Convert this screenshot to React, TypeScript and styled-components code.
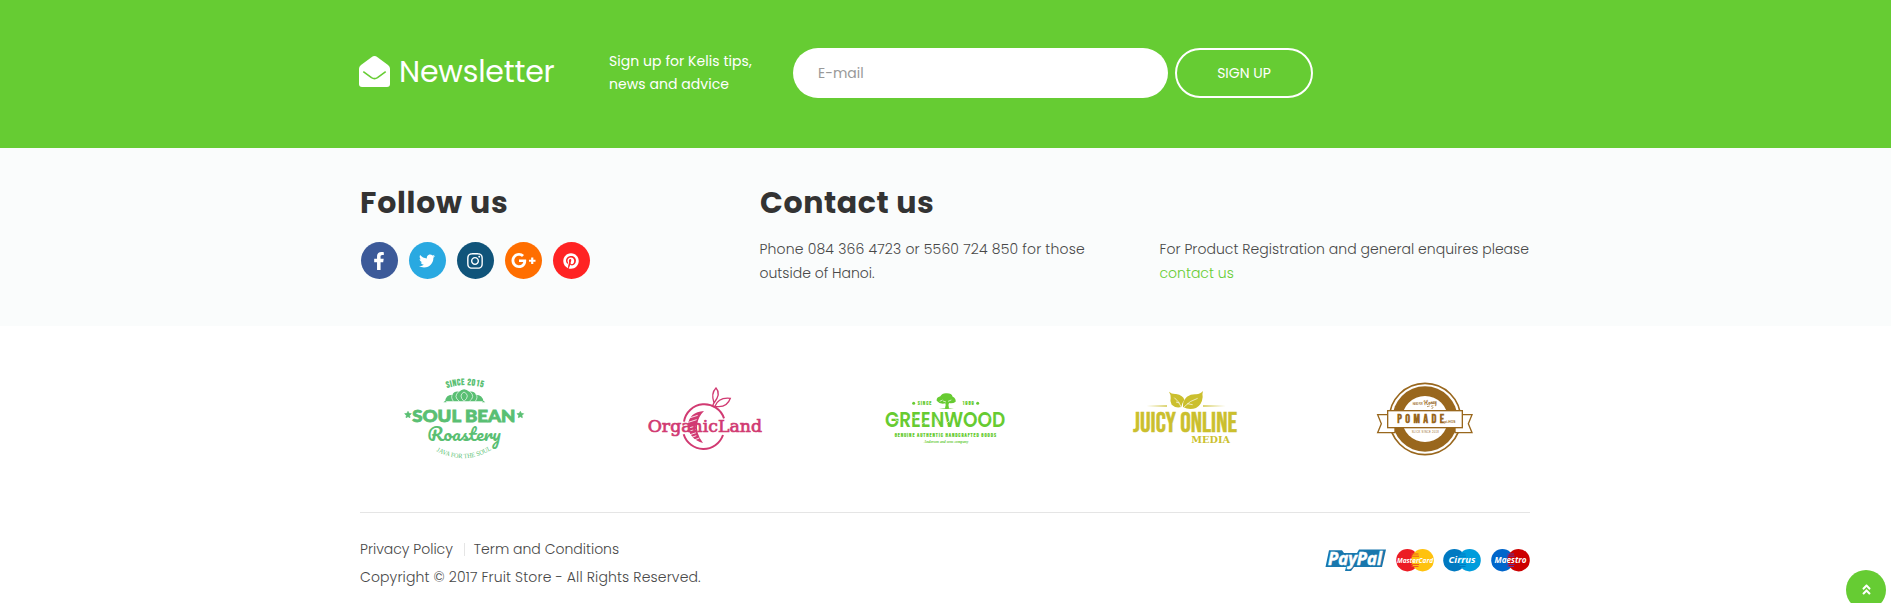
import React from 'react';
import styled, { createGlobalStyle } from 'styled-components';
import { FaFacebookF, FaTwitter, FaInstagram, FaGooglePlusG, FaPinterest, FaAngleDoubleUp } from 'react-icons/fa';

const GlobalStyle = createGlobalStyle`
  * { box-sizing: border-box; }
  body {
    margin: 0;
    background: #fff;
    color: #484848;
    font-family: Poppins, Inter, "Open Sans", sans-serif;
    font-size: 14px;
    line-height: 24px;
    overflow: hidden;
  }
  a { color: inherit; text-decoration: none; }
`;

const Container = styled.div`
  width: 1170px;
  margin: 0 auto 0 360px;
`;

const NewsletterBand = styled.section`
  height: 148px;
  background: #66cc33;
  color: #fff;
`;

const NewsletterRow = styled(Container)`
  display: flex;
  align-items: center;
  height: 146px;
`;

const NewsletterTitle = styled.h3`
  display: flex;
  align-items: center;
  width: 249px;
  margin: 0 0 3px;
  font-size: 30px;
  font-weight: 400;
  line-height: 36px;
  letter-spacing: -0.2px;
  svg { margin: 0 9px 0 -1px; flex: none; }
`;

const NewsletterText = styled.p`
  width: 184px;
  margin: 0;
  line-height: 23px;
  letter-spacing: 0.05px;
`;

const EmailInput = styled.input`
  width: 375px;
  height: 50px;
  padding: 0 25px;
  border: 0;
  border-radius: 25px;
  background: #fff;
  font: inherit;
  &::placeholder { color: #999; opacity: 1; }
`;

const SignUpButton = styled.button`
  width: 138px;
  height: 50px;
  margin-left: 7px;
  padding: 0;
  border: 2px solid #fff;
  border-radius: 25px;
  background: transparent;
  color: #fff;
  font: inherit;
`;

const InfoBand = styled.section`
  height: 178px;
  padding-top: 37px;
  background: #fafcfc;
`;

const InfoRow = styled(Container)`
  display: grid;
  grid-template-columns: 400px 400px 370px;
`;

const Heading = styled.h2<{ $spacing?: number }>`
  height: 36px;
  margin: 0 0 21px;
  color: #333;
  font-size: 30px;
  font-weight: 700;
  line-height: 36px;
  letter-spacing: ${p => p.$spacing ?? 0.6}px;
  white-space: nowrap;
`;

const Paragraph = styled.p`
  margin: -5px 0 0 -0.5px;
  font-weight: 300;
  white-space: nowrap;
`;

const Line = styled.span<{ $spacing: number }>`
  display: block;
  letter-spacing: ${p => p.$spacing}px;
`;

const GreenLink = styled.a`
  && { color: #66cc33; }
`;

const SocialList = styled.div`
  display: flex;
  gap: 11px;
  padding-left: 0.5px;
`;

const SocialLink = styled.a<{ $bg: string }>`
  display: flex;
  align-items: center;
  justify-content: center;
  width: 37px;
  height: 37px;
  border-radius: 50%;
  background: ${p => p.$bg};
  && { color: #fff; }
`;

const BrandRow = styled.section`
  display: flex;
  width: 1200px;
  height: 186px;
  margin: 0 auto 0 345px;
  padding-top: 44px;
`;

const Brand = styled.a`
  flex: 1;
  display: flex;
  justify-content: center;
  align-items: flex-start;
`;

const FooterBar = styled(Container)`
  display: flex;
  justify-content: space-between;
  height: 91px;
  border-top: 1px solid #e5e5e5;
  font-weight: 300;
  white-space: nowrap;
`;

const Legal = styled.div`
  padding-top: 22px;
  line-height: 28px;
`;

const LegalLinks = styled.div`
  display: flex;
  align-items: center;
`;

const Separator = styled.span`
  width: 1px;
  height: 13px;
  margin: 0 9px 0 11px;
  background: #e5e5e5;
`;

const Copyright = styled.div`
  letter-spacing: 0.13px;
`;

const Payments = styled.div`
  display: flex;
  align-items: flex-start;
  padding-top: 36px;
  svg { display: block; }
`;

const BackToTop = styled.a`
  position: fixed;
  right: 5px;
  bottom: -7px;
  display: flex;
  align-items: center;
  justify-content: center;
  width: 40px;
  height: 40px;
  padding-bottom: 2px;
  border-radius: 50%;
  background: #66cc33;
  && { color: #fff; }
`;

const EnvelopeIcon = () => (
  <svg width="31" height="31" viewBox="0 0 31 31">
    <path d="M2 9 L12.5 1.2 Q15.5 -1 18.5 1.2 L29 9 Q31 10.5 31 12.5 V28 Q31 31 28 31 H3 Q0 31 0 28 V12.5 Q0 10.5 2 9Z" fill="#fff" />
    <path d="M4.3 15.6 L12.5 21.6 Q15.5 23.6 18.5 21.6 L26.7 15.6" fill="none" stroke="#66cc33" strokeWidth="1.6" />
  </svg>
);

const fit = { lengthAdjust: 'spacingAndGlyphs' as const };
const condensed = '"Bebas Neue", Oswald, "Roboto Condensed", "Liberation Sans Narrow", "Liberation Sans", sans-serif';
const script = 'Pacifico, "Dancing Script", Z003, "Liberation Serif", serif';

const SoulBean = () => (
  <svg width="150" height="100" viewBox="0 0 450 300" fill="#5abf73">
    <path id="soulTop" d="M171 54 Q226 36 284 54" fill="none" />
    <path id="soulBottom" d="M139 243 Q222 288 305 239" fill="none" />
    <text fontFamily={condensed} fontWeight="700" fontSize="27"><textPath href="#soulTop" textLength="110">SINCE 2015</textPath></text>
    <path d="M166 94 Q166 75 187 74 Q193 62 207 65 Q222 50 238 65 Q252 62 258 74 Q278 74 280 94Z" />
    <path d="M190 94 Q181 80 188 73 M208 94 Q189 80 206 65 M238 94 Q257 80 240 65 M256 94 Q265 80 258 73 M222 94 Q204 76 222 66 Q242 76 222 94" fill="none" stroke="#fff" strokeWidth="2" />
    <path d="M160 97 l6 -5 4 5Z M276 97 l4 -5 6 5Z" />
    <path d="M54 124 l3 6 7 1 -5 5 1 7 -6 -3 -6 3 1 -7 -5 -5 7 -1Z M391 124 l3 6 7 1 -5 5 1 7 -6 -3 -6 3 1 -7 -5 -5 7 -1Z" stroke="#5abf73" strokeWidth="2" />
    <text x="67" y="156" fontFamily="Lato" fontWeight="900" fontSize="50" textLength="309" stroke="#5abf73" strokeWidth="2.5" {...fit}>SOUL BEAN</text>
    <text x="112" y="213" fontFamily={script} fontWeight="400" fontSize="50" textLength="220" {...fit}>Roastery</text>
    <text fontFamily="Liberation Serif" fontSize="20"><textPath href="#soulBottom" textLength="174" {...fit}>JAVA FOR THE SOUL</textPath></text>
  </svg>
);

const OrganicLand = () => (
  <svg width="150" height="100" viewBox="-15 -15 450 300" fill="#d13a72">
    <g fill="none" stroke="#d13a72">
      <path d="M147 140 A62 62 0 0 1 267 130 M146 178 A62 62 0 0 0 264 180" strokeWidth="6" />
      <path d="M237 84 Q227 55 243 39 Q259 56 237 84 M240 94 Q250 66 286 70 Q276 100 240 94 M233 92 L238 80" strokeWidth="4" />
    </g>
    <path d="M207 108 Q163 111 158 151 Q163 194 204 204 Q181 174 187 145 Q191 124 207 108Z" />
    <path d="M163 129 l25 -8 M160 142 l25 -8 M162 190 l22 -8 M169 198 l24 -9 M160 181 l23 -8 M158 160 l24 -7 M158 170 l24 -7" stroke="#fff" strokeWidth="2.5" />
    <text x="38" y="172" fontFamily='"DejaVu Serif", serif' fontWeight="400" fontSize="49" textLength="343" stroke="#d13a72" strokeWidth="2" {...fit}>OrganicLand</text>
  </svg>
);

const Greenwood = () => (
  <svg width="150" height="100" viewBox="0 -30 450 300" fill="#67cb31">
    <circle cx="131" cy="70" r="4.5" /><circle cx="323" cy="70" r="4.5" />
    <g fontFamily={condensed} fontWeight="700">
      <text x="143" y="76" fontSize="17" textLength="41">SINCE</text>
      <text x="277" y="76" fontSize="17" textLength="34">1989</text>
      <text x="74" y="171" fontSize="17" textLength="304">GENUINE AUTHENTIC HANDCRAFTED GOODS</text>
    </g>
    <path d="M200 62 Q199 52 211 49 Q217 38 231 40 Q245 40 248 50 Q258 54 257 65 Q248 72 237 69 Q233 76 237 85 H225 Q229 75 226 70 Q210 74 200 62Z M207 87 Q230 82 252 87Z" />
    <path d="M209 64 l9 -4 M219 63 l9 3 M234 64 l10 -4" stroke="#fff" strokeWidth="2" />
    <text x="45" y="142" fontFamily="Poppins, Lato" fontWeight="600" fontSize="63" textLength="361" {...fit}>GREENWOOD</text>
    <path d="M76 119 l12 6 M126 111 l11 4 M154 132 l14 -7 M194 110 l12 18 M226 134 l12 -12 M352 106 l6 9" stroke="#fff" strokeWidth="2" />
    <text x="162" y="188" fontFamily="Liberation Serif" fontStyle="italic" fontWeight="700" fontSize="13" textLength="133" {...fit}>Anderson and sons company</text>
  </svg>
);

const JuicyOnline = () => (
  <svg width="150" height="100" viewBox="-30 -30 450 300" fill="#cbbf2e">
    <defs>
      <linearGradient id="fadeL"><stop stopColor="#cbbf2e" stopOpacity="0" /><stop offset="1" stopColor="#cbbf2e" /></linearGradient>
      <linearGradient id="fadeR"><stop stopColor="#cbbf2e" /><stop offset="1" stopColor="#cbbf2e" stopOpacity="0" /></linearGradient>
    </defs>
    <rect x="80" y="76" width="61" height="4" fill="url(#fadeL)" />
    <rect x="249" y="76" width="68" height="4" fill="url(#fadeR)" />
    <path d="M147 35 Q155 43 168 42 Q190 46 193 60 Q186 68 184 81 Q168 86 155 74 Q149 64 152 54 Q152 42 147 35Z" />
    <path d="M249 33 Q246 43 248 51 Q246 74 228 84 Q208 92 189 81 Q187 63 201 50 Q213 42 228 43 Q242 42 249 33Z" />
    <path d="M163 53 Q178 65 184 82 M191 82 Q210 61 233 55 M168 66 l10 3 M202 71 l16 3" stroke="#fff" strokeWidth="2" fill="none" />
    <text x="39" y="156" fontFamily={condensed} fontWeight="400" fontSize="84" textLength="312" stroke="#cbbf2e" strokeWidth="1.5" {...fit}>JUICY ONLINE</text>
    <text x="214" y="188" fontFamily="DejaVu Serif" fontWeight="700" fontSize="29" textLength="116" {...fit}>MEDIA</text>
  </svg>
);

const Pomade = () => (
  <svg width="150" height="100" viewBox="-45 -15 450 300" fill="#99671d">
    <circle cx="180" cy="132" r="107" fill="#fff" stroke="#99671d" strokeWidth="5" />
    <circle cx="180" cy="132" r="98" />
    <circle cx="180" cy="132" r="69" fill="#fff" />
    <path d="M68 119 H38 L49 146 L38 173 H90 V158 M292 119 H321 L310 146 L321 173 H270 V158" fill="#fff" stroke="#99671d" strokeWidth="4" />
    <rect x="68" y="107" width="224" height="51" fill="#fff" stroke="#99671d" strokeWidth="4" />
    <text x="97" y="144" fontFamily={condensed} fontWeight="700" fontSize="36" textLength="140">POMADE</text>
    <text x="238" y="144" fontFamily="Liberation Sans" fontWeight="700" fontSize="11" textLength="33" {...fit}>pi-HOS</text>
    <text x="143" y="89" fontFamily="Liberation Sans" fontWeight="700" fontSize="8" textLength="30" {...fit}>HAND FOR</text>
    <text x="177" y="91" fontFamily={script} fontSize="17" textLength="39" transform="rotate(-8 176 91)" {...fit}>Honey</text>
    <path d="M186 95 l8 -2 M198 94 l7 -2 M200 102 l5 -6" stroke="#99671d" strokeWidth="2" />
    <text x="140" y="173" fontFamily="Liberation Sans" fontWeight="400" fontSize="8" textLength="81">SLICK SINCE 2018</text>
  </svg>
);

const PayPal = () => (
  <svg width="61" height="24" viewBox="0 0 61 24">
    <path d="M4 1.2 H17 L19 4 H32 L34 .5 H61 L57 18 H29 L26 22 H20 L21 18 H0.5Z" fill="#1877ad" />
    <text x="3" y="16" fontFamily="Open Sans" fontStyle="italic" fontWeight="700" fontSize="17" textLength="54" fill="#fff" stroke="#fff" strokeWidth=".5" {...fit}>PayPal</text>
  </svg>
);

type CardProps = { width: number; left: string; right: string; stripe: string; label: string; size: number; inset: number };

const OverlapCard = ({ width, left, right, stripe, label, size, inset }: CardProps) => (
  <svg width={width} height="23" viewBox={`0 0 ${width} 23`}>
    <circle cx="11.4" cy="11.2" r="11.2" fill={left} />
    <circle cx={width - 11.4} cy="11.2" r="11.2" fill={right} />
    <path d={`M${width / 2 - 3.5} 5 h7 M${width / 2 - 4} 7.2 h8 M${width / 2 - 4} 15.5 h8 M${width / 2 - 3.5} 17.5 h7`} stroke={stripe} strokeWidth="1" />
    <text x={inset} y="14" fontFamily="Open Sans" fontWeight="700" fontStyle="italic" fontSize={size} textLength={width - inset * 2} fill="#fff" {...fit}>{label}</text>
  </svg>
);

const PaymentGap = styled.span<{ $width: number }>`
  width: ${p => p.$width}px;
`;

const socials = [
  { name: 'Facebook', bg: '#3c5a99', icon: <FaFacebookF size={18} /> },
  { name: 'Twitter', bg: '#29a9e1', icon: <FaTwitter size={16} /> },
  { name: 'Instagram', bg: '#10547a', icon: <FaInstagram size={18} /> },
  { name: 'Google Plus', bg: '#ff6e00', icon: <FaGooglePlusG size={25} /> },
  { name: 'Pinterest', bg: '#ff2323', icon: <FaPinterest size={16} /> },
];

const brands = [SoulBean, OrganicLand, Greenwood, JuicyOnline, Pomade];

export default function App() {
  return (
    <>
      <GlobalStyle />
      <NewsletterBand>
        <NewsletterRow>
          <NewsletterTitle><EnvelopeIcon />Newsletter</NewsletterTitle>
          <NewsletterText>Sign up for Kelis tips,<br />news and advice</NewsletterText>
          <EmailInput placeholder="E-mail" />
          <SignUpButton>SIGN UP</SignUpButton>
        </NewsletterRow>
      </NewsletterBand>
      <InfoBand>
        <InfoRow>
          <div>
            <Heading $spacing={0.75}>Follow us</Heading>
            <SocialList>
              {socials.map(s => <SocialLink key={s.name} $bg={s.bg} href="#">{s.icon}</SocialLink>)}
            </SocialList>
          </div>
          <div>
            <Heading>Contact us</Heading>
            <Paragraph>
              <Line $spacing={0.17}>Phone 084 366 4723 or 5560 724 850 for those</Line>
              <Line $spacing={0}>outside of Hanoi.</Line>
            </Paragraph>
          </div>
          <div>
            <Heading />
            <Paragraph>
              <Line $spacing={0.03}>For Product Registration and general enquires please</Line>
              <GreenLink href="#">contact us</GreenLink>
            </Paragraph>
          </div>
        </InfoRow>
      </InfoBand>
      <BrandRow>
        {brands.map((Logo, i) => <Brand key={i} href="#"><Logo /></Brand>)}
      </BrandRow>
      <FooterBar>
        <Legal>
          <LegalLinks><a href="#">Privacy Policy</a><Separator /><a href="#">Term and Conditions</a></LegalLinks>
          <Copyright>Copyright © 2017 Fruit Store - All Rights Reserved.</Copyright>
        </Legal>
        <Payments>
          <PayPal />
          <PaymentGap $width={10} />
          <OverlapCard width={38} left="#ec1c24" right="#ffc20e" stripe="#ee5a1c" label="MasterCard" size={7} inset={1} />
          <PaymentGap $width={9} />
          <OverlapCard width={38} left="#0079c1" right="#009ddc" stripe="#0079c1" label="Cirrus" size={8.5} inset={5.5} />
          <PaymentGap $width={10} />
          <OverlapCard width={39} left="#0066cb" right="#cc0000" stripe="#65349a" label="Maestro" size={8.5} inset={3.5} />
        </Payments>
      </FooterBar>
      <BackToTop href="#"><FaAngleDoubleUp size={13} /></BackToTop>
    </>
  );
}
